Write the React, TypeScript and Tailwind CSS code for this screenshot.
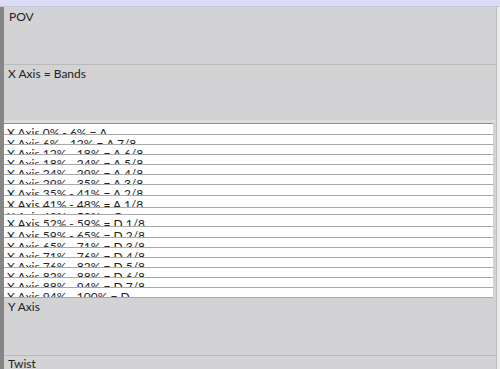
import React from "react";

const rows: { label: string; cls: string }[] = [
  { label: "X Axis 0% - 6% = A", cls: "h-[11px]" },
  { label: "X Axis 6% - 12% = A 7/8", cls: "h-[10px]" },
  { label: "X Axis 12% - 18% = A 6/8", cls: "h-[10px]" },
  { label: "X Axis 18% - 24% = A 5/8", cls: "h-[10px]" },
  { label: "X Axis 24% - 29% = A 4/8", cls: "h-[10px]" },
  { label: "X Axis 29% - 35% = A 3/8", cls: "h-[10px]" },
  { label: "X Axis 35% - 41% = A 2/8", cls: "h-[11px]" },
  { label: "X Axis 41% - 48% = A 1/8", cls: "h-[12px]" },
  { label: "X Axis 48% - 52% = C", cls: "h-[7px]" },
  { label: "X Axis 52% - 59% = D 1/8", cls: "h-[12px]" },
  { label: "X Axis 59% - 65% = D 2/8", cls: "h-[11px]" },
  { label: "X Axis 65% - 71% = D 3/8", cls: "h-[10px]" },
  { label: "X Axis 71% - 76% = D 4/8", cls: "h-[10px]" },
  { label: "X Axis 76% - 82% = D 5/8", cls: "h-[10px]" },
  { label: "X Axis 82% - 88% = D 6/8", cls: "h-[10px]" },
  { label: "X Axis 88% - 94% = D 7/8", cls: "h-[10px]" },
  { label: "X Axis 94% - 100% = D", cls: "h-[10px]" },
];

export default function App() {
  return (
    <div
      className="w-[500px] h-[369px] overflow-hidden flex flex-col bg-[#d3d3d5] text-[#222] text-[12px] leading-[14px]"
      style={{ fontFamily: "Lato, 'Liberation Sans', sans-serif" }}
    >
      <div className="h-[7px] shrink-0 bg-[#dcdcf5] border-b border-[#c6c6e2]" />
      <div className="flex-1 flex min-h-0">
        <div className="w-[4px] shrink-0 bg-[#868686]" />
        <div className="flex-1 flex flex-col min-w-0 border-r border-[#bcbcbc]">
          <div className="h-[58px] shrink-0 border-b border-[#bababa] pl-[5px] pt-[3px]">POV</div>
          <div className="h-[55px] shrink-0 pl-[4px] pt-[2px]">X Axis = Bands</div>
          <div className="h-[3px] shrink-0 bg-[#dcdcdc]" />
          <div className="flex shrink-0">
            <div className="w-[489px] bg-[#fefefe] border-t border-[#8e8e8e]">
              {rows.map((r) => (
                <div
                  key={r.label}
                  className={`${r.cls} overflow-hidden border-b border-[#a8a8a8] pl-[3px] pt-[2px] whitespace-nowrap`}
                >
                  {r.label}
                </div>
              ))}
            </div>
          </div>
          <div className="h-[58px] shrink-0 border-b border-[#bababa] pl-[4px] pt-[2px]">Y Axis</div>
          <div className="flex-1 pl-[4px] pt-[1px]">Twist</div>
        </div>
        <div className="w-[3px] shrink-0 bg-[#ececec]" />
      </div>
    </div>
  );
}
